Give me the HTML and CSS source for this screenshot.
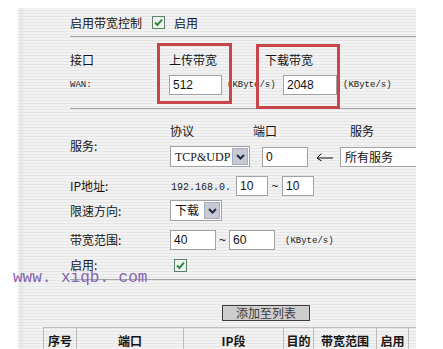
FILE: index.html
```html
<!DOCTYPE html>
<html lang="zh-CN">
<head>
<meta charset="utf-8">
<title>带宽控制</title>
<link rel="stylesheet" href="styles.css">
</head>
<body>
<div class="panel">
  <div class="sec enable">
    <span class="t">启用带宽控制</span>
    <svg class="cb cb-top" width="13" height="13" viewBox="0 0 13 13"><rect x="0.5" y="0.5" width="12" height="12" fill="#eef3ee" stroke="#5f7f6c"/><path d="M3 6.5 L5.4 9 L10 3.6" fill="none" stroke="#2f8c3c" stroke-width="2"/></svg>
    <span class="t">启用</span>
  </div>

  <div class="sec bw">
    <span class="t g-if">接口</span>
    <span class="t g-up">上传带宽</span>
    <span class="t down">下载带宽</span>
    <span class="mono wan">WAN:</span>
    <span class="inp w53 g-upi">512</span>
    <span class="mono kb g-kb1">(KByte/s)</span>
    <span class="inp w54 g-dni">2048</span>
    <span class="mono kb g-kb2">(KByte/s)</span>
    <div class="mark mark1"></div>
    <div class="mark mark2"></div>
  </div>

  <div class="sec rules">
    <div class="svc">
      <span class="lab">服务:</span>
      <div class="svc-body">
        <div class="svc-head">
          <span class="h1">协议</span>
          <span class="h2">端口</span>
          <span>服务</span>
        </div>
        <div class="svc-ctrl">
          <span class="sel w80"><span class="sv">TCP&amp;UDP</span><span class="btn"><svg width="9" height="6" viewBox="0 0 9 6"><path d="M1 1 L4.5 4.5 L8 1" fill="none" stroke="#1f2a44" stroke-width="2"/></svg></span></span>
          <span class="inp w46 ml12">0</span>
          <svg class="arrow" width="17" height="10" viewBox="0 0 17 10"><path d="M5.5 1.5 L1 6 L5.5 9" fill="none" stroke="#111" stroke-width="1"/><path d="M1 6 H17" stroke="#111" stroke-width="1"/></svg>
          <span class="inp w100">所有服务</span>
        </div>
      </div>
    </div>
    <div class="row r-ip">
      <span class="lab">IP地址:</span>
      <span class="mono ip">192.168.0.</span>
      <span class="inp w32">10</span>
      <span class="tilde">~</span>
      <span class="inp w32">10</span>
    </div>
    <div class="row r-dir">
      <span class="lab">限速方向:</span>
      <span class="sel w52"><span class="sv">下载</span><span class="btn"><svg width="9" height="6" viewBox="0 0 9 6"><path d="M1 1 L4.5 4.5 L8 1" fill="none" stroke="#1f2a44" stroke-width="2"/></svg></span></span>
    </div>
    <div class="row r-range">
      <span class="lab">带宽范围:</span>
      <span class="inp w46">40</span>
      <span class="tilde t13">~</span>
      <span class="inp w46">60</span>
      <span class="mono kb kb3">(KByte/s)</span>
    </div>
    <div class="row r-en">
      <span class="lab">启用:</span>
      <svg class="cb cb-row" width="13" height="13" viewBox="0 0 13 13"><rect x="0.5" y="0.5" width="12" height="12" fill="#eef3ee" stroke="#5f7f6c"/><path d="M3 6.5 L5.4 9 L10 3.6" fill="none" stroke="#2f8c3c" stroke-width="2"/></svg>
    </div>
  </div>

  <div class="add">
    <span class="addbtn">添加至列表</span>
  </div>

  <table class="list">
    <colgroup>
      <col class="c1"><col class="c2"><col class="c3"><col class="c4"><col class="c5"><col class="c6"><col class="c7">
    </colgroup>
    <tr>
      <th>序号</th><th>端口</th><th>IP段</th><th>目的</th><th>带宽范围</th><th>启用</th><th></th>
    </tr>
  </table>
</div>
<div class="watermark">www. xiqb. com</div>
</body>
</html>
```

FILE: styles.css
```css
* { box-sizing: border-box; }
html, body { margin: 0; background: #fff; }
body {
  width: 443px;
  height: 349px;
  overflow: hidden;
  position: relative;
  font-family: "Noto Sans CJK SC", "Liberation Sans", sans-serif;
  font-size: 12px;
  line-height: 16px;
  color: #151515;
}
.panel {
  margin: 8px 0 0 17px;
  width: 399px;
  height: 341px;
  position: relative;
  overflow: hidden;
  background:
    linear-gradient(to right, rgba(255,255,255,0.5) 0 2px, rgba(0,0,0,0.03) 2px 6px, transparent 6px),
    repeating-linear-gradient(to bottom, #f2f2f2 0 2px, #e6e6e6 2px 3px);
}
.sec {
  margin-left: 53px;
  border-bottom: 1px solid #a6a6a6;
}
.mono {
  font-family: "Liberation Mono", monospace;
  font-size: 9px;
  color: #222;
}

/* top row */
.enable {
  height: 29px;
  display: flex;
  align-items: center;
  padding-top: 1px;
}
.cb { display: block; }
.cb-top { margin: 0 9px 0 10px; }

/* bandwidth block */
.bw {
  display: grid;
  grid-template-columns: 99px 56px 58px 58px auto;
  grid-template-rows: 18px 20px;
  row-gap: 6px;
  align-items: center;
  padding: 14px 0 13px;
  height: 72px;
}
.g-if { grid-column: 1; grid-row: 1; }
.g-up { grid-column: 2; grid-row: 1; }
.bw .down { grid-column: 3 / span 2; grid-row: 1; padding-left: 40px; }
.wan { grid-column: 1; grid-row: 2; font-size: 9px; }
.g-upi { grid-column: 2; grid-row: 2; }
.g-kb1 { grid-column: 3; grid-row: 2; }
.g-dni { grid-column: 4; grid-row: 2; }
.g-kb2 { grid-column: 5; grid-row: 2; }
.inp {
  display: flex;
  align-items: center;
  height: 20px;
  background: #fff;
  border: 1px solid #a2a2a2;
  padding-left: 3px;
  font-family: "Liberation Sans", "Noto Sans CJK SC", sans-serif;
  font-size: 12px;
  color: #111;
  white-space: nowrap;
  overflow: hidden;
}
.w53 { width: 53px; }
.w54 { width: 54px; }
.w46 { width: 46px; }
.w32 { width: 32px; }
.w100 { width: 100px; padding-left: 4px; font-family: "Noto Sans CJK SC", sans-serif; }
.ml12 { margin-left: 12px; }
.kb { padding-left: 2px; }

/* annotation boxes */
.mark {
  position: absolute;
  border: 3px solid #c9454c;
}
.mark1 { left: 140px; top: 35px; width: 75px; height: 61px; }
.mark2 { left: 239px; top: 36px; width: 84px; height: 65px; }

/* rules block */
.rules {
  padding: 14px 0 7px;
  height: 171px;
}
.lab { width: 100px; flex: none; }
.svc { display: flex; align-items: center; }
.svc .lab { padding-top: 2px; }
.svc-head { display: flex; height: 16px; margin-bottom: 7px; }
.svc-head .h1 { width: 83px; }
.svc-head .h2 { width: 97px; }
.svc-ctrl { display: flex; align-items: center; height: 21px; }
.arrow { display: block; margin: 1px 7px 0 8px; }

.sel {
  display: flex;
  align-items: center;
  justify-content: space-between;
  height: 21px;
  background: #fff;
  border: 1px solid #a2a2a2;
  padding: 0 1px 0 4px;
}
.w80 { width: 80px; }
.w52 { width: 52px; }
.sv { font-family: "Liberation Serif", "Noto Sans CJK SC", serif; font-size: 12px; }
.btn {
  width: 16px;
  height: 17px;
  display: flex;
  align-items: center;
  justify-content: center;
  background: #c6cad3;
  border: 1px solid #a9aebb;
}

.row { display: flex; align-items: center; }
.r-ip { margin-top: 9px; height: 20px; }
.r-dir { margin-top: 4px; height: 21px; }
.r-range { margin-top: 9px; height: 20px; }
.r-en { margin-top: 8px; height: 14px; }
.ip { font-size: 10px; width: 66px; padding: 4px 0 0 1px; }
.tilde { width: 14px; text-align: center; font-family: "Liberation Sans", sans-serif; }
.t13 { width: 13px; }
.kb3 { padding-left: 10px; padding-top: 2px; }
.cb-row { margin-left: 4px; }

/* add button */
.add { padding: 25px 0 0 205px; height: 47px; }
.addbtn {
  display: flex;
  align-items: center;
  justify-content: center;
  width: 88px;
  height: 16px;
  background: #cdcdcd;
  border: 1px solid #3c3c3c;
  color: #3a3a3a;
  font-size: 12px;
}

/* list table */
.list {
  margin-left: 26px;
  border-collapse: collapse;
  table-layout: fixed;
  width: 405px;
}
.c1 { width: 33px; }
.c2 { width: 107px; }
.c3 { width: 100px; }
.c4 { width: 30px; }
.c5 { width: 63px; }
.c6 { width: 32px; }
.c7 { width: 40px; }
.list th {
  border: 1px solid #bdbdbd;
  height: 27px;
  padding: 0;
  font-weight: bold;
  font-size: 12px;
  text-align: center;
  white-space: nowrap;
  overflow: hidden;
}

.watermark {
  position: absolute;
  left: 13px;
  top: 269px;
  font-family: "Liberation Mono", monospace;
  font-size: 16px;
  line-height: 18px;
  color: #8663b0;
  white-space: pre;
}
```
